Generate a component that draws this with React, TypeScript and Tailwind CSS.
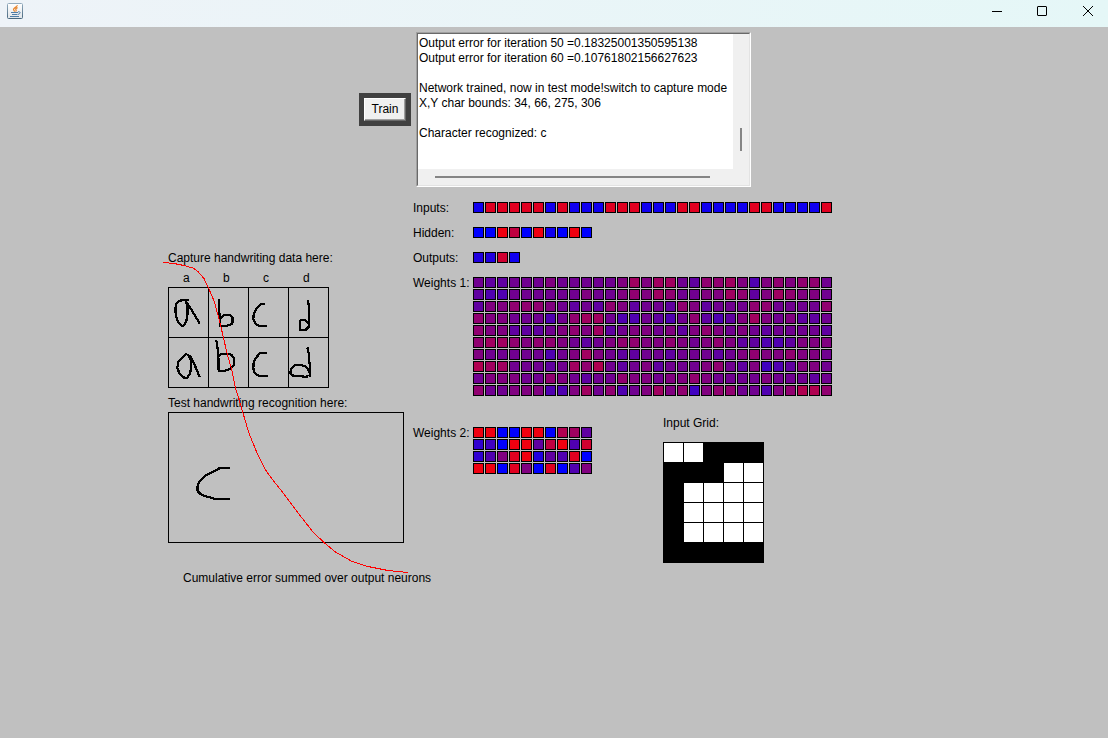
import React from "react";

const LEVEL: Record<string, string> = {
  "0": "bg-[#0000ff]",
  "1": "bg-[#1000f0]",
  "2": "bg-[#2000e0]",
  "3": "bg-[#3000d0]",
  "4": "bg-[#4000c0]",
  "5": "bg-[#5000b0]",
  "6": "bg-[#6000a0]",
  "7": "bg-[#700090]",
  "8": "bg-[#800080]",
  "9": "bg-[#900070]",
  a: "bg-[#a00060]",
  b: "bg-[#b00050]",
  c: "bg-[#c00040]",
  d: "bg-[#d00030]",
  e: "bg-[#e00020]",
  f: "bg-[#f00010]",
};

// Each character is a neuron or weight level: 0 is blue, f is red.
const INPUTS = ["1eeeee1e111eee111ee1111ee1111e"];
const HIDDEN = ["00fc0f10f0"];
const OUTPUTS = ["22d1"];
const WEIGHTS_1 = [
  "7667778777778a8aa7699a85898997",
  "655777777877898a97788a968a9887",
  "688999876769867769867779977779",
  "988777579aa755765796568a878667",
  "9886667898a6788786898787677776",
  "9aa989987678998898789866556888",
  "877777578a87667767776789889887",
  "baa77767a9b7678677789768456887",
  "788877987677988788987777877767",
  "977888558a79578a89489977589bb9",
];
const WEIGHTS_2 = ["ff00ff0ba6", "340ff6cf5d", "358ef265e0", "ff0e80e058"];

const INPUT_GRID = ["00111", "11100", "10000", "10000", "10000", "11111"];

// Strokes use three units per pixel.
const SAMPLES = [
  {
    box: "42 129 117 147",
    d: "M102 164L88 164L72 168L63 178L61 195L63 215L70 232L80 243L87 241L94 228L98 205L97 182L92 168L110 195L122 215L134 236",
  },
  {
    box: "162 129 117 147",
    d: "M191 163L191 185L194 210L194 243L215 242L232 237L233 218L225 209L208 209L196 222",
  },
  {
    box: "282 129 117 147",
    d: "M330 176L318 178L304 192L296 208L295 222L301 235L312 243L336 243",
  },
  {
    box: "402 129 117 147",
    d: "M458 165L462 185L463 215L463 250M434 224L434 255L452 255L461 245L461 235L452 226L434 225",
  },
  {
    box: "42 279 117 147",
    d: "M95 326L82 337L70 350L67 368L73 385L84 397L96 399L105 385L109 365L108 345L97 327M102 330L108 338L118 357L126 377L134 396",
  },
  {
    box: "162 279 117 147",
    d: "M184 286L187 305L190 330L191 378L208 378L226 372L237 361L238 342L230 330L218 326L200 326L190 334",
  },
  {
    box: "282 279 117 147",
    d: "M336 323L316 323L304 337L296 352L295 370L298 382L308 391L320 394L338 394",
  },
  {
    box: "402 279 117 147",
    d: "M457 307L461 325L463 350L466 372L466 396M466 388L458 372L450 364L438 360L418 361L408 372L406 384L412 391L428 394L440 394L455 396L458 390",
  },
];

const LOG = `Output error for iteration 50 =0.18325001350595138
Output error for iteration 60 =0.10761802156627623

Network trained, now in test mode!switch to capture mode
X,Y char bounds: 34, 66, 275, 306

Character recognized: c
`;

function Cells({ rows }: { rows: string[] }) {
  return (
    <div className="flex flex-col gap-px">
      {rows.map((row, y) => (
        <div key={y} className="flex gap-px">
          {row.split("").map((level, x) => (
            <div key={x} className={`size-[11px] shrink-0 border border-black ${LEVEL[level]}`} />
          ))}
        </div>
      ))}
    </div>
  );
}

function Layer({ label, rows }: { label: string; rows: string[] }) {
  return (
    <div className="flex items-start">
      <div className="h-[11px] w-[60px] shrink-0 leading-[13px] whitespace-nowrap">{label}</div>
      <Cells rows={rows} />
    </div>
  );
}

function JavaIcon() {
  return (
    <svg width="16" height="16" viewBox="0 0 16 16" aria-hidden="true">
      <defs>
        <linearGradient id="frame" x1="0" y1="0" x2="0" y2="1">
          <stop offset="0" stopColor="#93abbd" />
          <stop offset="1" stopColor="#48687f" />
        </linearGradient>
        <linearGradient id="face" x1="0" y1="0" x2="0" y2="1">
          <stop offset="0" stopColor="#ffffff" />
          <stop offset="1" stopColor="#dfe4e8" />
        </linearGradient>
      </defs>
      <rect x="0.5" y="0.5" width="15" height="15" rx="1" fill="url(#face)" stroke="url(#frame)" />
      <path
        d="M10.3 2.2C10.6 4 6.3 4.7 6.5 6.5C6.6 7.3 7.6 7.8 7.7 8.6M10.6 4.6C9 5.2 8.3 6 9 6.8C9.4 7.4 9.2 8 8.6 8.5"
        fill="none"
        stroke="#e8842c"
        strokeWidth="1.2"
      />
      <path d="M4 9.5H11M5 11.5H10.5M3 13.5H12" fill="none" stroke="#4f7da6" />
      <path d="M11 8.8C13.8 8.2 13.8 10.8 11 11.4" fill="none" stroke="#4f7da6" />
    </svg>
  );
}

function TitleBar() {
  return (
    <header className="flex h-[27px] items-start justify-between bg-linear-to-r from-[#eef3f8] to-[#e5f7f7] pl-[7px]">
      <div className="pt-[3px]">
        <JavaIcon />
      </div>
      <div className="flex gap-[6px]">
        <button type="button" aria-label="Minimize" className="flex h-[22px] w-10 items-center justify-center">
          <svg width="12" height="12" viewBox="0 0 12 12" shapeRendering="crispEdges">
            <path d="M2 6.5H12" stroke="#000" />
          </svg>
        </button>
        <button type="button" aria-label="Maximize" className="flex h-[22px] w-10 items-center justify-center">
          <svg width="12" height="12" viewBox="0 0 12 12">
            <rect x="1.5" y="1.5" width="9" height="9" rx="0.5" fill="none" stroke="#000" />
          </svg>
        </button>
        <button type="button" aria-label="Close" className="flex h-[22px] w-10 items-center justify-center">
          <svg width="12" height="12" viewBox="0 0 12 12">
            <path d="M1 1L11 11M11 1L1 11" stroke="#000" />
          </svg>
        </button>
      </div>
    </header>
  );
}

function Controls() {
  return (
    <div className="flex items-center justify-center gap-[5px] pt-[5px] pl-0.5">
      <div className="bg-[#404040] p-[5px]">
        <button
          type="button"
          className="block h-[23px] w-[42px] border border-t-white border-r-[#696969] border-b-[#696969] border-l-white bg-[#f0f0f0] leading-[21px] shadow-[inset_-1px_-1px_0_#a0a0a0]"
        >
          Train
        </button>
      </div>
      <div className="border border-t-[#a0a0a0] border-r-white border-b-white border-l-[#a0a0a0]">
        <div className="grid grid-cols-[auto_16px] grid-rows-[auto_16px] border border-t-[#696969] border-r-[#e3e3e3] border-b-[#e3e3e3] border-l-[#696969] bg-[#f0f0f0]">
          <textarea
            aria-label="Training log"
            readOnly
            wrap="off"
            defaultValue={LOG}
            className="block h-[135px] w-[315px] resize-none overflow-hidden border-r-2 border-white bg-white pt-0.5 pl-px leading-[15px] outline-none"
          />
          <div className="flex justify-center pt-[94px]">
            <div className="h-[23px] w-0.5 bg-[#858585]" />
          </div>
          <div className="flex items-center pr-[23px] pl-[17px]">
            <div className="h-0.5 grow bg-[#858585]" />
          </div>
        </div>
      </div>
    </div>
  );
}

function Handwriting() {
  return (
    <section className="flex w-[245px] shrink-0 flex-col pt-[64px] leading-[14px] whitespace-nowrap">
      <h2>Capture handwriting data here:</h2>
      <div className="mt-[6px] grid grid-cols-[repeat(4,40px)] pl-[15px]">
        <span>a</span>
        <span>b</span>
        <span>c</span>
        <span>d</span>
      </div>
      <div className="mt-[2px] grid grid-cols-[repeat(4,40px)] self-start border-t border-l border-black">
        {SAMPLES.map((sample) => (
          <div key={sample.box} className="h-[50px] border-r border-b border-black">
            <svg width="39" height="49" viewBox={sample.box} shapeRendering="crispEdges">
              <path d={sample.d} fill="none" stroke="#000" strokeWidth="6.8" strokeLinejoin="round" />
            </svg>
          </div>
        ))}
      </div>
      <h2 className="mt-[8px]">Test handwriting recognition here:</h2>
      <div className="mt-[2px] h-[131px] w-[236px] border border-black">
        <svg width="234" height="129" viewBox="42 69 702 387" shapeRendering="crispEdges">
          <path
            d="M225 234L195 234L172 246L150 258L133 276L127 290L128 304L140 315L160 321L182 327L225 327"
            fill="none"
            stroke="#000"
            strokeWidth="6.8"
            strokeLinejoin="round"
          />
        </svg>
      </div>
      <p className="mt-[28px] pl-[15px]">Cumulative error summed over output neurons</p>
    </section>
  );
}

function ErrorCurve() {
  return (
    <svg
      className="pointer-events-none absolute top-[73px] left-[9px]"
      width="247"
      height="315"
      viewBox="163 260 247 315"
      shapeRendering="crispEdges"
      aria-hidden="true"
    >
      <polyline
        points="163,262.5 174,263.5 184,265.5 193,268 198,271.500 204,278.500 208.500,288 214.500,302 220.500,325 223.500,338 227,353 231.500,369 235.500,388 238,396 243,413 248.500,432 257,453 265,469 270.500,477 285.500,496 302,518 313,532 324.500,543 335.500,552 352,561.500 368,566.500 388,570.500 408,572.500"
        fill="none"
        stroke="#f00"
      />
    </svg>
  );
}

function Network() {
  return (
    <section className="flex flex-col gap-[14px] pt-[15px]">
      <Layer label="Inputs:" rows={INPUTS} />
      <Layer label="Hidden:" rows={HIDDEN} />
      <Layer label="Outputs:" rows={OUTPUTS} />
      <Layer label="Weights 1:" rows={WEIGHTS_1} />
      <div className="flex items-start gap-[71px] pt-[6px]">
        <div className="pt-[11px]">
          <Layer label="Weights 2:" rows={WEIGHTS_2} />
        </div>
        <div className="leading-[14px]">
          <h2>Input Grid:</h2>
          <div className="mt-[12px] grid grid-cols-[repeat(5,19px)] gap-px bg-black p-px">
            {INPUT_GRID.join("")
              .split("")
              .map((on, i) => (
                <div key={i} className={on === "1" ? "h-[19px] bg-black" : "h-[19px] bg-white"} />
              ))}
          </div>
        </div>
      </div>
    </section>
  );
}

export default function App() {
  return (
    <div className="min-h-screen bg-[#c0c0c0] font-['Liberation_Sans',Arial,sans-serif] text-[12px] text-black">
      <TitleBar />
      <main>
        <Controls />
        <div className="relative mx-auto flex w-full max-w-[800px] pl-[14px]">
          <Handwriting />
          <Network />
          <ErrorCurve />
        </div>
      </main>
    </div>
  );
}
